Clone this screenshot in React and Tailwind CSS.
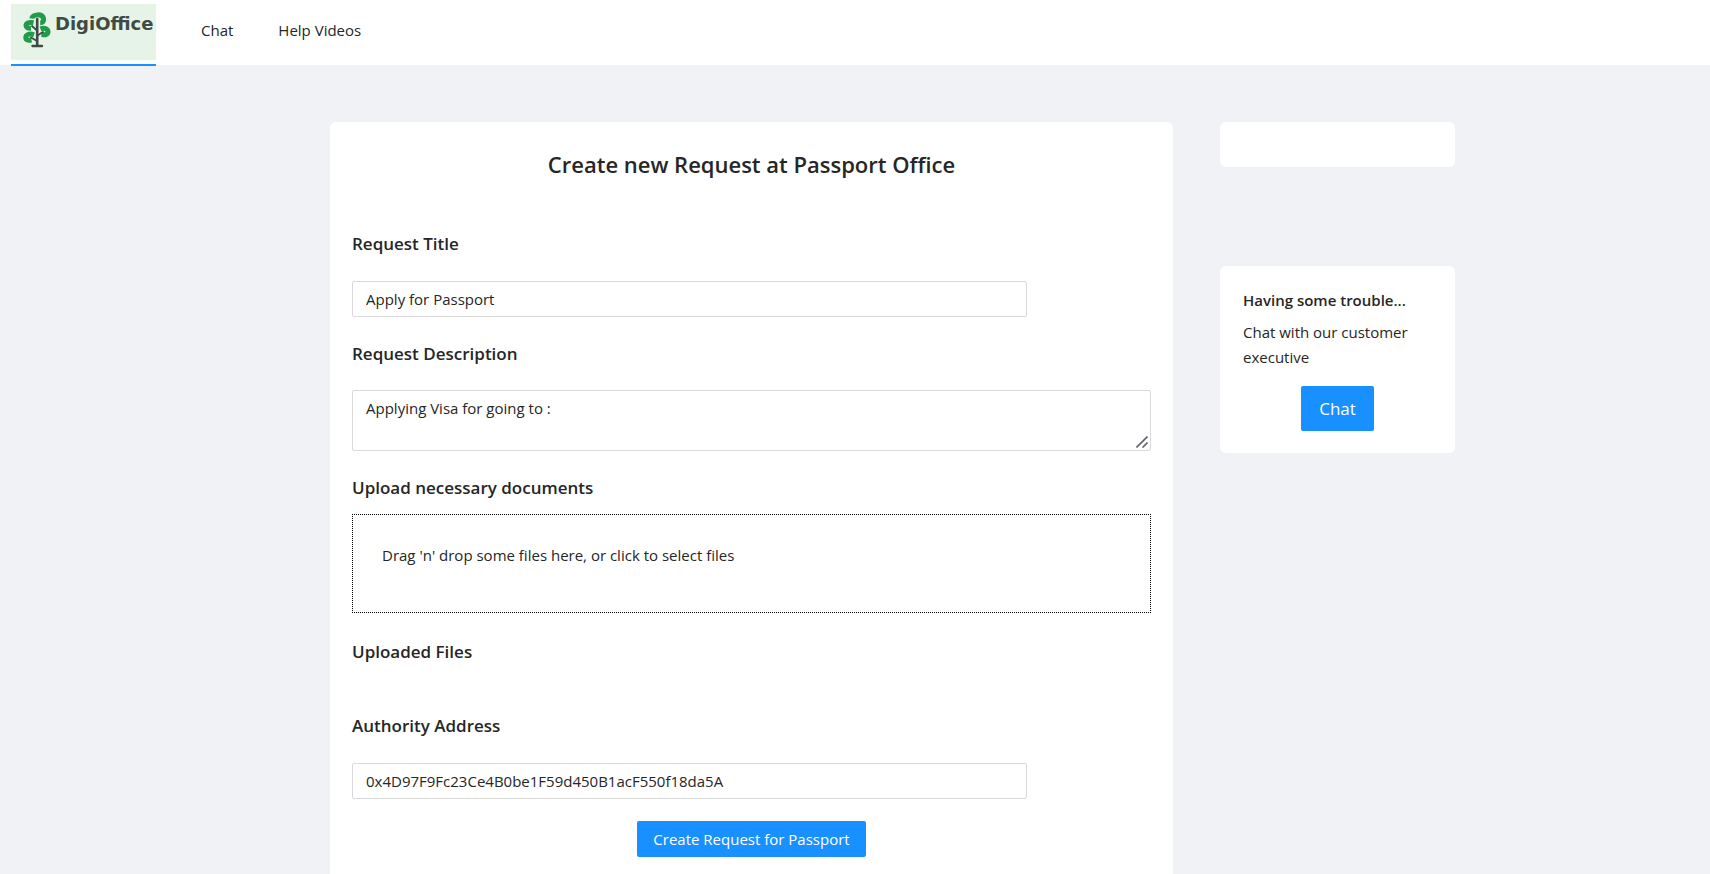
import { useState } from 'react';

function TreeLogo() {
  return (
    <svg viewBox="0 0 28 36" className="h-9 w-7" fill="none" aria-hidden="true">
      <g stroke="#219b48" strokeWidth="5">
        <path d="M8.800 6.600C9.300 2 19.500 1.200 20.600 6.800C21 9.500 19.500 10.800 17.200 10.800" />
        <path d="M10.500 10.800C5.500 9.800 3 11.500 3 13.600C3 15.600 5 16.400 8 16.200" />
        <path d="M17.500 16.800C22 15.200 25 17.200 25 19.800C25 22.500 22.300 23 18.500 22.600" />
        <path d="M11 22.800C6 21 2.800 22.800 2.800 25.600C2.800 28 5 28.800 8.500 28" />
      </g>
      <g stroke="#3f4a45" strokeLinecap="round">
        <path d="M14.200 7V33" strokeWidth="2.600" />
        <path d="M14 18.500L9 14M14.500 23.500L20 20M14 29L8 25.500" strokeWidth="1.800" />
        <path d="M9.500 34H19" strokeWidth="2.400" />
      </g>
    </svg>
  );
}

function Header() {
  return (
    <header className="flex h-[65px] items-start bg-white pl-[11px]">
      <a href="#home" className="h-[66px] border-b-2 border-[#1890ff] pt-1">
        <span className="flex h-14 w-[145px] items-start bg-[#e5f4e6] pt-2 pl-3">
          <TreeLogo />
          <span className="ml-1 font-['DejaVu_Sans'] text-[18px] leading-6 font-bold text-[#3f4a45]">DigiOffice</span>
        </span>
      </a>
      <nav className="ml-[45px] flex gap-[45px] pt-[18px] leading-[25px]">
        <a href="#chat">Chat</a>
        <a href="#videos">Help Videos</a>
      </nav>
    </header>
  );
}

function RequestForm() {
  const [title, setTitle] = useState('Apply for Passport');
  const [description, setDescription] = useState('Applying Visa for going to :');
  const [address, setAddress] = useState('0x4D97F9Fc23Ce4B0be1F59d450B1acF550f18da5A');

  return (
    <form className="flex flex-col rounded-t-md bg-white px-[22px] pt-6 pb-4" onSubmit={(e) => e.preventDefault()}>
      <h1 className="text-center text-[22px] leading-9 font-semibold">Create new Request at Passport Office</h1>

      <label htmlFor="title" className="mt-12 text-[17px] leading-7 font-semibold">Request Title</label>
      <input
        id="title"
        value={title}
        onChange={(e) => setTitle(e.target.value)}
        className="mt-[23px] h-9 w-[84.5%] rounded-xs border border-[#d9d9d9] px-[13px]"
      />

      <label htmlFor="description" className="mt-[23px] text-[17px] leading-7 font-semibold">Request Description</label>
      <div className="relative mt-[22px] flex">
        <textarea
          id="description"
          value={description}
          onChange={(e) => setDescription(e.target.value)}
          className="h-[61px] w-full resize-none rounded-xs border border-[#d9d9d9] px-[13px] py-[5px] leading-[25px]"
        />
        <svg viewBox="0 0 12 12" className="pointer-events-none absolute right-[3px] bottom-[3px] size-3" stroke="#5f6368" strokeWidth="1.600" aria-hidden="true">
          <path d="M.5 11.500L11.500 .5M6.500 11.500L11.500 6.500" />
        </svg>
      </div>

      <h2 className="mt-[23px] text-[17px] leading-7 font-semibold">Upload necessary documents</h2>
      <label htmlFor="files" className="mt-3 h-[99px] border border-dotted border-black px-[29px] pt-7 leading-[25px]">
        Drag 'n' drop some files here, or click to select files
        <input id="files" type="file" multiple className="sr-only" />
      </label>

      <h2 className="mt-[25px] text-[17px] leading-7 font-semibold">Uploaded Files</h2>

      <label htmlFor="address" className="mt-[46px] text-[17px] leading-7 font-semibold">Authority Address</label>
      <input
        id="address"
        value={address}
        onChange={(e) => setAddress(e.target.value)}
        className="mt-[23px] h-9 w-[84.5%] rounded-xs border border-[#d9d9d9] px-[13px]"
      />

      <button type="submit" className="mt-[22px] h-9 self-center rounded-xs bg-[#1890ff] px-4 text-white">
        Create Request for Passport
      </button>
    </form>
  );
}

function Sidebar() {
  return (
    <aside>
      <div className="h-[45px] rounded-md bg-white" />
      <div className="mt-[99px] flex flex-col rounded-md bg-white px-[23px] pt-[22px] pb-[22px]">
        <h2 className="leading-[25px] font-semibold">Having some trouble...</h2>
        <p className="mt-[7px] leading-[25px]">Chat with our customer executive</p>
        <button type="button" className="mt-4 h-[45px] self-center rounded-xs bg-[#1890ff] px-[18px] text-[17px] text-white">
          Chat
        </button>
      </div>
    </aside>
  );
}

export default function App() {
  return (
    <div className="flex min-h-screen flex-col bg-[#f0f2f5] font-['Open_Sans',sans-serif] text-[15px] font-normal text-[#262626]">
      <Header />
      <main className="grid flex-1 grid-cols-[843fr_235fr] gap-[47px] pt-[57px] pr-[255px] pl-[330px]">
        <RequestForm />
        <Sidebar />
      </main>
    </div>
  );
}
